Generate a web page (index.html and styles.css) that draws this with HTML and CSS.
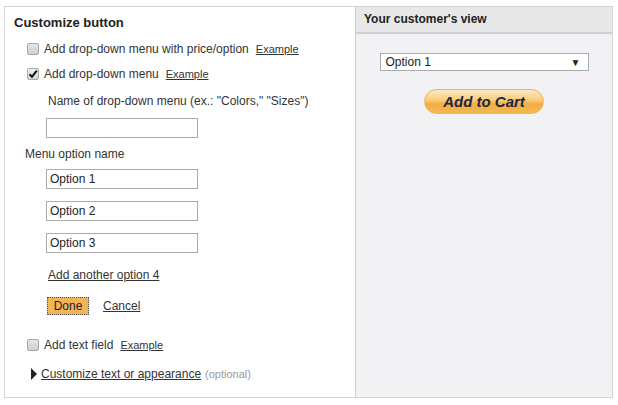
FILE: index.html
```html
<!DOCTYPE html>
<html>
<head>
<meta charset="utf-8">
<link rel="stylesheet" href="styles.css">
</head>
<body>
<div class="frame">
  <div class="left">
    <div class="heading">Customize button</div>
    <div class="row r1"><span class="cb"></span><span class="lbl">Add drop-down menu with price/option</span><a class="ex" href="#">Example</a></div>
    <div class="row r2"><span class="cb checked"><svg width="10" height="10" viewBox="0 0 10 10"><path d="M1.5 5.2 L4 7.8 L8.8 1.6" fill="none" stroke="#111" stroke-width="2"/></svg></span><span class="lbl">Add drop-down menu</span><a class="ex" href="#">Example</a></div>
    <div class="sub namelbl">Name of drop-down menu (ex.: "Colors," "Sizes")</div>
    <div class="sub inp first"></div>
    <div class="optlbl">Menu option name</div>
    <div class="sub inp o1">Option 1</div>
    <div class="sub inp o2">Option 2</div>
    <div class="sub inp o2">Option 3</div>
    <div class="sub addmore"><a href="#">Add another option 4</a></div>
    <div class="sub actions"><span class="done">Done</span><a href="#" class="cancel">Cancel</a></div>
    <div class="row r3"><span class="cb"></span><span class="lbl">Add text field</span><a class="ex" href="#">Example</a></div>
    <div class="row r4"><span class="tri"></span><a href="#" class="cust">Customize text or appearance</a><span class="opt">(optional)</span></div>
  </div>
  <div class="right">
    <div class="rhead">Your customer's view</div>
    <div class="select"><span>Option 1</span><span class="arrow">▼</span></div>
    <div class="cart">Add to Cart</div>
  </div>
</div>
</body>
</html>
```
FILE: styles.css
```css
* { box-sizing: border-box; }
body {
  margin: 0;
  font-family: "Liberation Sans", Arial, sans-serif;
  font-size: 12px;
  color: #333;
  background: #fff;
}
a { color: #333; text-decoration: underline; }
.frame {
  margin: 6px 5px 0 4px;
  height: 392px;
  border: 1px solid #d4d4d4;
  display: flex;
}
.left {
  flex: 1;
  padding-left: 9px;
}
.heading {
  margin-top: 7px;
  height: 18px;
  line-height: 18px;
  font-weight: bold;
  font-size: 13px;
  color: #222;
}
.row {
  height: 20px;
  display: flex;
  align-items: center;
  padding-left: 13px;
}
.r1 { margin-top: 7px; }
.r2 { margin-top: 5px; }
.r3 { margin-top: 20px; }
.r4 { margin-top: 10px; padding-left: 17px; height: 18px; }
.cb {
  width: 12px;
  height: 12px;
  border: 1px solid #a9a9a9;
  border-radius: 2px;
  background: linear-gradient(#e6e6e6, #cfcfcf);
  margin-right: 5px;
  display: flex;
  align-items: center;
  justify-content: center;
}
.cb.checked { background: linear-gradient(#eee, #d6d6d6); }
.lbl { margin-right: 7px; }
.ex { font-size: 11px; }
.sub { margin-left: 32px; }
.namelbl { margin-top: 8px; height: 18px; line-height: 18px; margin-left: 34px; }
.inp {
  width: 152px;
  height: 20px;
  border: 1px solid #a8abb0;
  line-height: 18px;
  padding-left: 3px;
  font-size: 12px;
  color: #222;
}
.inp.first { margin-top: 8px; }
.optlbl { margin-top: 7px; height: 18px; line-height: 18px; margin-left: 11px; }
.o1 { margin-top: 6px; }
.o2 { margin-top: 12px; }
.addmore { margin-top: 13px; height: 18px; line-height: 18px; margin-left: 34px; }
.actions {
  margin-top: 13px;
  height: 18px;
  display: flex;
  align-items: center;
  margin-left: 33px;
}
.done {
  width: 42px;
  height: 18px;
  line-height: 16px;
  text-align: center;
  background: #f3b455;
  border: 1px dotted #555;
  color: #222;
  margin-right: 14px;
}
.tri {
  width: 0;
  height: 0;
  border-top: 6px solid transparent;
  border-bottom: 6px solid transparent;
  border-left: 6px solid #222;
  margin-right: 4px;
}
.cust { margin-right: 4px; }
.opt { font-size: 11px; color: #999; }
.right {
  width: 257px;
  border-left: 1px solid #cfcfd2;
  background: #f2f2f4;
  display: flex;
  flex-direction: column;
  align-items: center;
}
.rhead {
  align-self: stretch;
  height: 27px;
  border-bottom: 2px solid #cfcfd2;
  background: #e8e8e8;
  font-weight: bold;
  font-size: 12px;
  line-height: 25px;
  padding-left: 8px;
  color: #222;
}
.select {
  margin-top: 19px;
  width: 209px;
  height: 18px;
  background: #fff;
  border: 1px solid #a8abb0;
  display: flex;
  align-items: center;
  justify-content: space-between;
  padding: 0 7px 0 5px;
  font-size: 12px;
  color: #222;
}
.arrow { font-size: 10px; }
.cart {
  margin-top: 18px;
  width: 120px;
  height: 25px;
  border-radius: 13px;
  border: 1px solid #eab564;
  background: linear-gradient(#fdebc4 0%, #f8cb77 45%, #f3ad45 60%, #f5b752 100%);
  text-align: center;
  line-height: 23px;
  font-weight: bold;
  font-style: italic;
  font-size: 15px;
  color: #1c2640;
}
```
